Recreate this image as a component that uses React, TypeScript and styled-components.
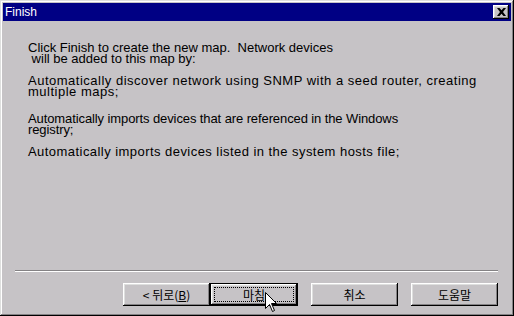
import React from 'react';
import styled, { createGlobalStyle, css } from 'styled-components';

const GlobalStyle = createGlobalStyle`
  html, body {
    margin: 0;
    padding: 0;
    background: #c6c3c6;
  }
`;

const Window = styled.div`
  position: relative;
  box-sizing: border-box;
  width: 514px;
  height: 316px;
  padding: 3px;
  display: flex;
  flex-direction: column;
  background: #c6c3c6;
  box-shadow: inset -1px -1px #000, inset 1px 1px #dedfde, inset -2px -2px #848284, inset 2px 2px #fff;
  font-family: 'Liberation Sans', Arial, sans-serif;
  color: #000;
`;

const TitleBar = styled.div`
  height: 18px;
  display: flex;
  align-items: center;
  justify-content: space-between;
  padding: 0 2px 0 2px;
  background: #000084;
  color: #fff;
  font-size: 12px;
`;

const TitleText = styled.span`
  line-height: 18px;
`;

const CloseButton = styled.div`
  box-sizing: border-box;
  width: 16px;
  height: 14px;
  display: flex;
  align-items: center;
  justify-content: center;
  background: #c6c3c6;
  box-shadow: inset -1px -1px #000, inset 1px 1px #fff, inset -2px -2px #848284, inset 2px 2px #dedfde;
`;

const Body = styled.div`
  flex: 1;
  display: flex;
  flex-direction: column;
`;

const Content = styled.div`
  flex: 1;
  padding: 21px 0 0 25px;
  font-size: 13px;
`;

// Gulim's latin glyphs run wider on some lines than Arial metrics; $track evens that out
const Para = styled.p<{ $gap: number; $track?: number }>`
  margin: 0 0 ${p => p.$gap}px 0;
  line-height: 11px;
  letter-spacing: ${p => p.$track ?? 0}px;
  white-space: pre;
`;

const Separator = styled.div`
  margin: 0 13px 0 12px;
  height: 0;
  border-top: 1px solid #848284;
  border-bottom: 1px solid #fff;
`;

const ButtonRow = styled.div`
  display: flex;
  justify-content: flex-end;
  padding: 11px 13px 7px 0;
`;

const Button = styled.div<{ $default?: boolean; $gapLeft?: number }>`
  position: relative;
  box-sizing: border-box;
  width: 87px;
  height: 23px;
  margin-left: ${p => p.$gapLeft ?? 0}px;
  display: flex;
  align-items: center;
  justify-content: center;
  background: #c6c3c6;
  font-family: 'Noto Sans CJK KR', 'Liberation Sans', sans-serif;
  font-size: 12px;
  box-shadow: inset -1px -1px #000, inset 1px 1px #fff, inset -2px -2px #848284, inset 2px 2px #dedfde;
  ${p =>
    p.$default &&
    css`
      width: 88px;
      box-shadow: inset 0 0 0 1px #000, inset -2px -2px #000, inset 2px 2px #fff, inset -3px -3px #848284, inset 3px 3px #dedfde;
      &::after {
        content: '';
        position: absolute;
        inset: 4px;
        border: 1px dotted #000;
      }
    `}
`;

const Mnemonic = styled.span`
  text-decoration: underline;
`;

const Cursor = styled.svg`
  position: absolute;
  left: 265px;
  top: 292px;
`;

export default function App() {
  return (
    <>
      <GlobalStyle />
      <Window>
        <TitleBar>
          <TitleText>Finish</TitleText>
          <CloseButton>
            <svg width="9" height="8" viewBox="0 0 9 8">
              <path d="M0 0h2.5l2 2.3 2-2.3H9L6 4l3 4H6.5l-2-2.3-2 2.3H0l3-4z" fill="#000" />
            </svg>
          </CloseButton>
        </TitleBar>
        <Body>
          <Content>
            <Para $gap={11}>{'Click Finish to create the new map.  Network devices\n will be added to this map by:'}</Para>
            <Para $gap={16} $track={0.5}>{'Automatically discover network using SNMP with a seed router, creating\nmultiple maps;'}</Para>
            <Para $gap={11} $track={-0.1}>{'Automatically imports devices that are referenced in the Windows\nregistry;'}</Para>
            <Para $gap={0} $track={0.45}>{'Automatically imports devices listed in the system hosts file;'}</Para>
          </Content>
          <Separator />
          <ButtonRow>
            <Button>
              &lt; 뒤로(<Mnemonic>B</Mnemonic>)
            </Button>
            <Button $default>마침</Button>
            <Button $gapLeft={13}>취소</Button>
            <Button $gapLeft={13}>도움말</Button>
          </ButtonRow>
        </Body>
        <Cursor width="13" height="22" viewBox="0 0 13 22">
          <path
            d="M0.5 0.5V16.5L4.5 12.5L7.5 19.5L9.5 18.5L6.5 11.5H11.5Z"
            fill="#fff"
            stroke="#000"
            strokeWidth="1"
          />
        </Cursor>
      </Window>
    </>
  );
}
